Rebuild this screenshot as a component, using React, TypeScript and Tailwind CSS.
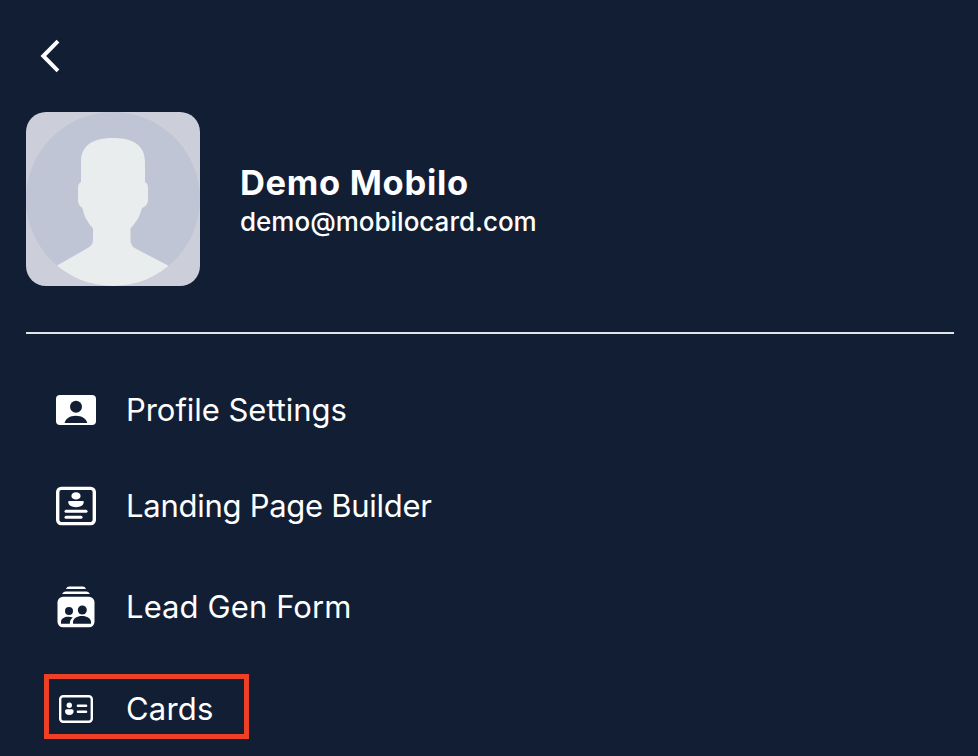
import type { ReactNode } from "react";

interface MenuItem {
  label: string;
  icon: ReactNode;
  rowClass: string;
  textClass: string;
}

function BackIcon() {
  return (
    <svg className="w-6 h-9" viewBox="0 0 24 36" fill="none" stroke="currentColor" strokeWidth="4">
      <path d="M20 3.200 5.300 18 20 32.800" />
    </svg>
  );
}

function Avatar() {
  return (
    <svg className="w-[174px] h-[174px] rounded-[20px]" viewBox="0 0 174 174">
      <defs>
        <clipPath id="avatar-circle">
          <circle cx="87" cy="87" r="87" />
        </clipPath>
      </defs>
      <rect width="174" height="174" fill="#cccfda" />
      <circle cx="87" cy="87" r="87" fill="#c0c5d6" />
      <path
        clipPath="url(#avatar-circle)"
        fill="#e9eded"
        d="M55 70V50C55 34 66 26 87 26s32 8 32 24v20c2 1 3 3 3 6v12c0 4-3 7-6 8-2 8-6 15-11.500 20.500V128c0 4 1.500 6.500 5 8.500L142 153.500V174H31v-20.500l30-17c4-2.200 6-4.500 6-8.500v-11.500C61 110 57.500 103 56.500 96c-2.500-1.500-4.500-4-4.500-8V76c0-3 1-5 3-6z"
      />
    </svg>
  );
}

function ProfileIcon() {
  return (
    <svg className="w-10 h-10" viewBox="0 0 40 40">
      <rect y="5" width="40" height="30" rx="4" fill="currentColor" />
      <circle cx="20" cy="16.700" r="6" fill="#121e34" />
      <path d="M8.500 33c1-4.500 5.500-7.300 11.300-7.300S30.300 28.500 31.300 33z" fill="#121e34" />
    </svg>
  );
}

function LandingPageIcon() {
  return (
    <svg className="w-10 h-10" viewBox="0 0 40 40" fill="currentColor">
      <rect x="1.700" y="2.400" width="36.600" height="35.200" rx="3.500" fill="none" stroke="currentColor" strokeWidth="3.400" />
      <ellipse cx="20" cy="9.900" rx="4.600" ry="3.600" />
      <path d="M12.200 16q0-1 1-1h13.600q1 0 1 1c0 3-3.200 5.200-7.800 5.200S12.200 19 12.200 16z" />
      <rect x="8.500" y="23.800" width="23" height="3" rx="1.500" />
      <rect x="8.500" y="29.800" width="18" height="3" rx="1.500" />
    </svg>
  );
}

function LeadFormIcon() {
  return (
    <svg className="w-10 h-[42px]" viewBox="0 0 40 42" fill="currentColor">
      <path d="M10 2.900c.8-1.700 1.700-2.500 3.200-2.500h13.600c1.500 0 2.400.8 3.200 2.500zM6.200 7.900c.6-1.600 1.800-2.500 3.500-2.500h20.600c1.700 0 2.900.9 3.500 2.500z" />
      <rect x="1.500" y="10.800" width="37" height="30.500" rx="5.500" />
      <g fill="#121e34">
        <circle cx="13" cy="25" r="4" />
        <circle cx="26.300" cy="24" r="4.500" />
        <path d="M5 37.700v-2c0-3 3.300-5 7.500-5 1.700 0 3 .2 4.300.8-2 1.400-3 3.500-3 6.200z" />
        <path d="M17 37.700v-1.500c0-3.600 4-6.100 9-6.100s9 2.500 9 6.100v1.500z" />
      </g>
    </svg>
  );
}

function CardIcon() {
  return (
    <svg className="w-10 h-10" viewBox="0 0 40 40" fill="currentColor">
      <rect x="4.200" y="7.200" width="31.600" height="25.600" rx="3" fill="none" stroke="currentColor" strokeWidth="2.400" />
      <circle cx="13.300" cy="16.300" r="2.700" />
      <path d="M9 22q0-1.800 1.800-1.800h5q1.800 0 1.800 1.800c0 2.500-1.600 4-4.300 4S9 24.500 9 22z" />
      <rect x="20.700" y="15.500" width="10.600" height="2.500" rx="1.200" />
      <rect x="20.700" y="21.500" width="10.600" height="2.500" rx="1.200" />
    </svg>
  );
}

const menuItems: MenuItem[] = [
  {
    label: "Profile Settings",
    icon: <ProfileIcon />,
    rowClass: "h-24",
    textClass: "tracking-[-0.04px]",
  },
  {
    label: "Landing Page Builder",
    icon: <LandingPageIcon />,
    rowClass: "h-24",
    textClass: "tracking-[-0.27px]",
  },
  {
    label: "Lead Gen Form",
    icon: <LeadFormIcon />,
    rowClass: "h-[106px]",
    textClass: "tracking-[0.1px]",
  },
  {
    label: "Cards",
    icon: <CardIcon />,
    rowClass: "mt-3.5 -ml-3 h-[65px] w-[205px] border-5 border-[#ee4026] pl-[7px] pt-[5px]",
    textClass: "tracking-[0.2px]",
  },
];

export default function App() {
  return (
    <div className="h-[756px] w-full overflow-hidden bg-[#121e34] pl-[26px] pr-6 pt-[38px] font-['Inter',sans-serif] text-white">
      <button className="ml-3 block" aria-label="Back">
        <BackIcon />
      </button>

      {/* Account header */}
      <div className="mt-[38px] flex items-center gap-10 border-b-2 border-[#e2e4e8] pb-[46px]">
        <Avatar />
        <div className="pt-1">
          <h1 className="w-max text-[34.500px] font-bold leading-[42px] tracking-[0.7px]">Demo Mobilo</h1>
          <p className="w-max text-[26px] font-medium leading-9">demo@mobilocard.com</p>
        </div>
      </div>

      {/* Menu */}
      <nav className="flex flex-col pl-[30px] pt-7">
        {menuItems.map((item) => (
          <a key={item.label} className={`flex shrink-0 items-center gap-[30px] ${item.rowClass}`}>
            {item.icon}
            <span className={`whitespace-nowrap text-[31px] leading-10 ${item.textClass}`}>{item.label}</span>
          </a>
        ))}
      </nav>
    </div>
  );
}
